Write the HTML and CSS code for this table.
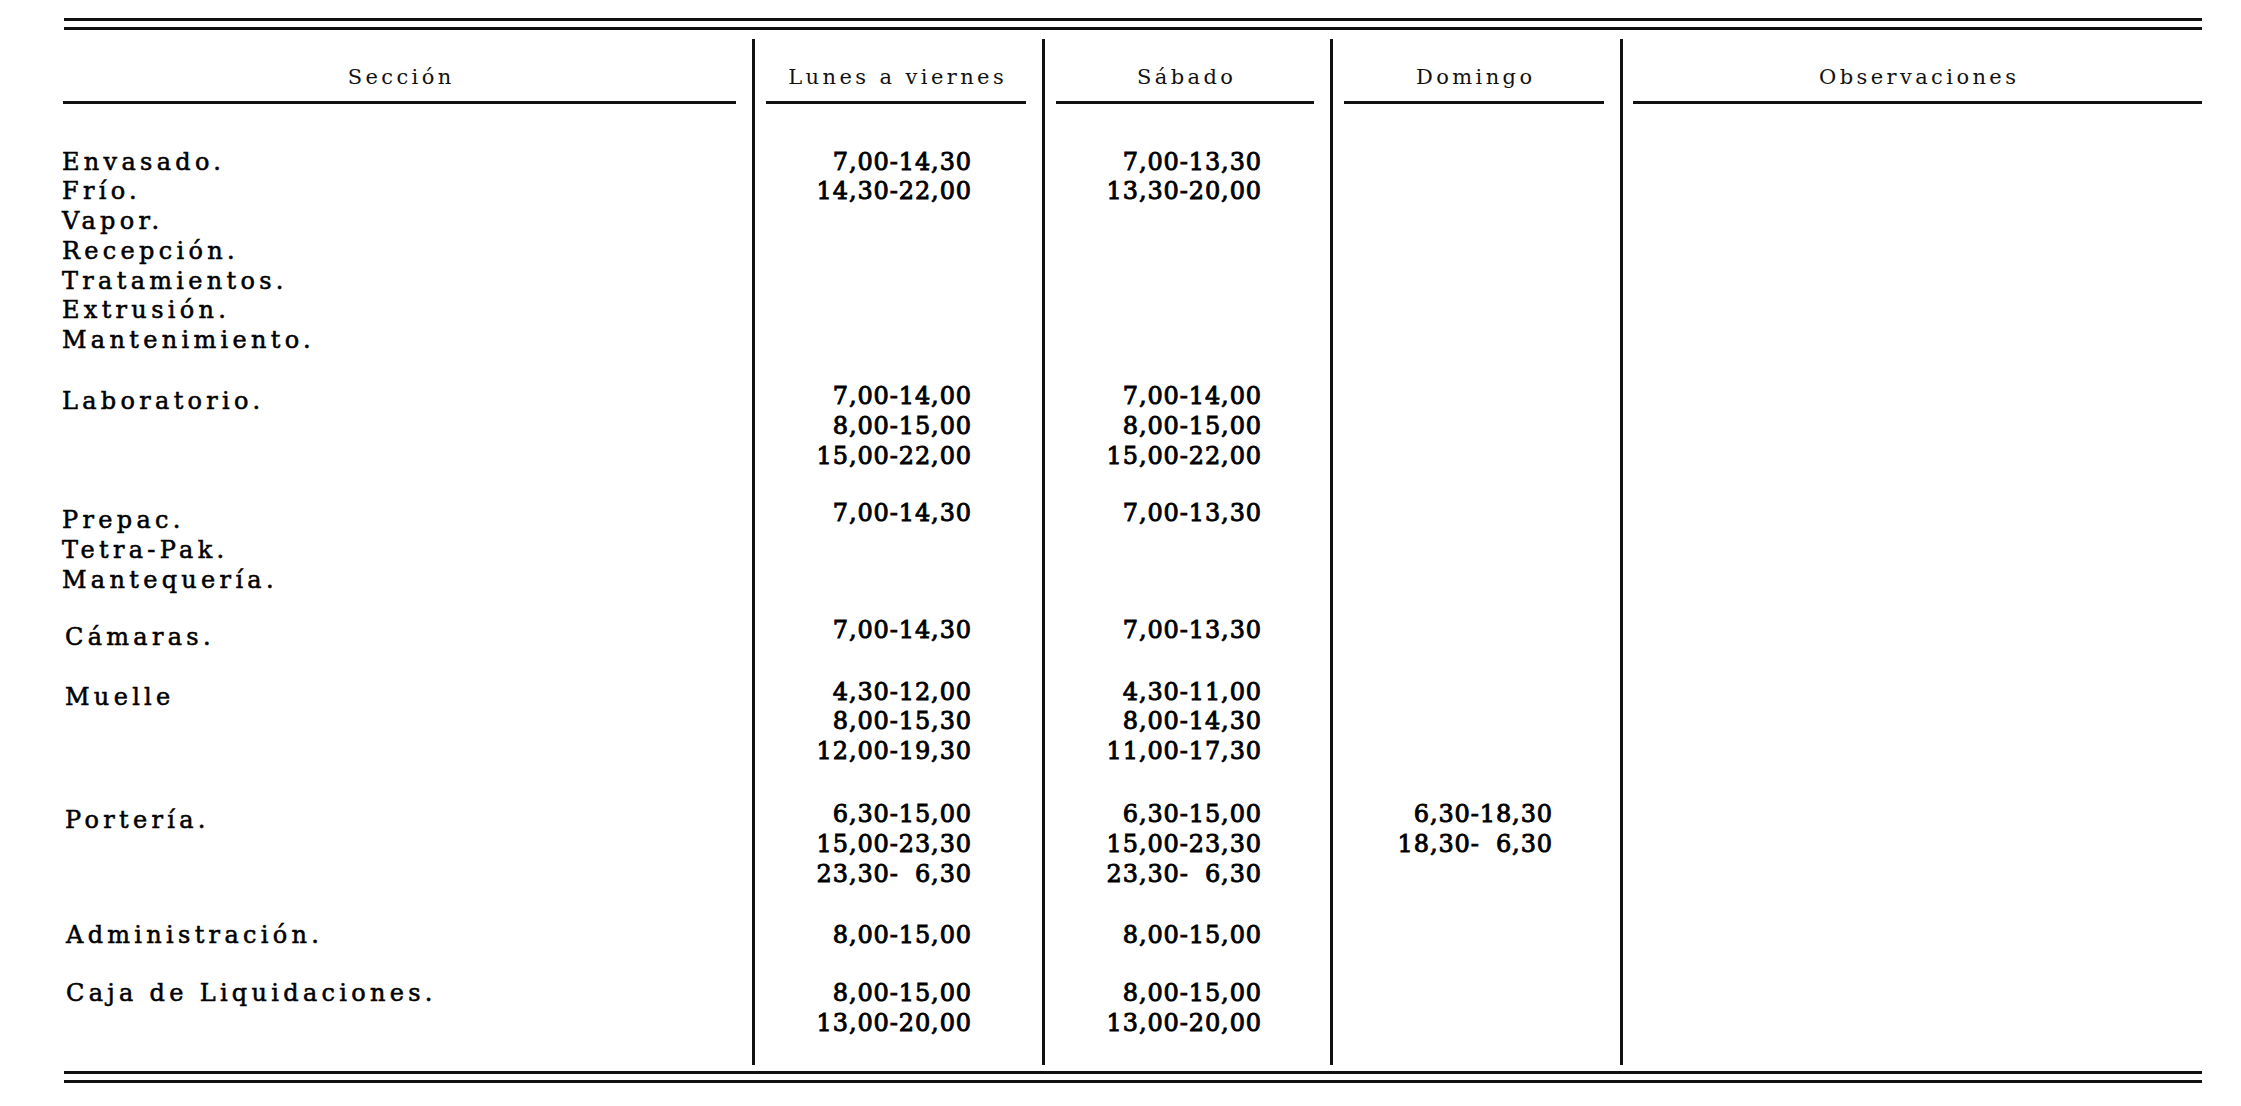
FILE: index.html
```html
<!DOCTYPE html>
<html lang="es">
<head>
<meta charset="utf-8">
<title>Horarios por sección</title>
<link rel="stylesheet" href="styles.css">
</head>
<body>
<div class="page">
  <div class="rule-double"></div>
  <div class="tbl">
    <div class="row head">
      <div class="cell h1"><div class="htext">Sección</div><div class="hline"></div></div>
      <div class="cell h2"><div class="htext">Lunes a viernes</div><div class="hline"></div></div>
      <div class="cell h3"><div class="htext">Sábado</div><div class="hline"></div></div>
      <div class="cell h4"><div class="htext">Domingo</div><div class="hline"></div></div>
      <div class="cell h5"><div class="htext">Observaciones</div><div class="hline"></div></div>
    </div>

    <div class="row g1">
      <div class="cell lab"><div>Envasado.</div><div>Frío.</div><div>Vapor.</div><div>Recepción.</div><div>Tratamientos.</div><div>Extrusión.</div><div>Mantenimiento.</div></div>
      <div class="cell tm c2"><div>7,00-14,30</div><div>14,30-22,00</div></div>
      <div class="cell tm c3"><div>7,00-13,30</div><div>13,30-20,00</div></div>
      <div class="cell tm c4"></div>
      <div class="cell obs"></div>
    </div>

    <div class="row g2">
      <div class="cell lab"><div>Laboratorio.</div></div>
      <div class="cell tm c2"><div>7,00-14,00</div><div>8,00-15,00</div><div>15,00-22,00</div></div>
      <div class="cell tm c3"><div>7,00-14,00</div><div>8,00-15,00</div><div>15,00-22,00</div></div>
      <div class="cell tm c4"></div>
      <div class="cell obs"></div>
    </div>

    <div class="row g3">
      <div class="cell lab"><div>Prepac.</div><div>Tetra-Pak.</div><div>Mantequería.</div></div>
      <div class="cell tm c2"><div>7,00-14,30</div></div>
      <div class="cell tm c3"><div>7,00-13,30</div></div>
      <div class="cell tm c4"></div>
      <div class="cell obs"></div>
    </div>

    <div class="row g4">
      <div class="cell lab"><div>Cámaras.</div></div>
      <div class="cell tm c2"><div>7,00-14,30</div></div>
      <div class="cell tm c3"><div>7,00-13,30</div></div>
      <div class="cell tm c4"></div>
      <div class="cell obs"></div>
    </div>

    <div class="row g5">
      <div class="cell lab"><div>Muelle</div></div>
      <div class="cell tm c2"><div>4,30-12,00</div><div>8,00-15,30</div><div>12,00-19,30</div></div>
      <div class="cell tm c3"><div>4,30-11,00</div><div>8,00-14,30</div><div>11,00-17,30</div></div>
      <div class="cell tm c4"></div>
      <div class="cell obs"></div>
    </div>

    <div class="row g6">
      <div class="cell lab"><div>Portería.</div></div>
      <div class="cell tm c2"><div>6,30-15,00</div><div>15,00-23,30</div><div>23,30-&#8199;6,30</div></div>
      <div class="cell tm c3"><div>6,30-15,00</div><div>15,00-23,30</div><div>23,30-&#8199;6,30</div></div>
      <div class="cell tm c4"><div>6,30-18,30</div><div>18,30-&#8199;6,30</div></div>
      <div class="cell obs"></div>
    </div>

    <div class="row g7">
      <div class="cell lab"><div>Administración.</div></div>
      <div class="cell tm c2"><div>8,00-15,00</div></div>
      <div class="cell tm c3"><div>8,00-15,00</div></div>
      <div class="cell tm c4"></div>
      <div class="cell obs"></div>
    </div>

    <div class="row g8">
      <div class="cell lab"><div>Caja de Liquidaciones.</div></div>
      <div class="cell tm c2"><div>8,00-15,00</div><div>13,00-20,00</div></div>
      <div class="cell tm c3"><div>8,00-15,00</div><div>13,00-20,00</div></div>
      <div class="cell tm c4"></div>
      <div class="cell obs"></div>
    </div>
  </div>
  <div class="rule-double bottom"></div>
</div>
</body>
</html>
```

FILE: styles.css
```css
* { box-sizing: border-box; }

html, body {
  margin: 0;
  padding: 0;
  background: #ffffff;
  color: #000000;
  font-family: "DejaVu Serif", "Liberation Serif", serif;
}

.page {
  width: 2241px;
  padding: 18px 0 0 62px;
}

.rule-double {
  margin-left: 2px;
  width: 2138px;
  height: 12px;
  border-top: 3px solid #111;
  border-bottom: 3px solid #111;
}

.rule-double.bottom {
  margin-top: 6px;
}

.tbl {
  margin-top: 9px;
  display: grid;
  grid-template-columns: 690px 290px 288px 290px 582px;
  width: 2140px;
}

.row { display: contents; }

.cell {
  font-size: 24px;
  line-height: 29.8px;
}

.row > .cell:not(:first-child) {
  border-left: 3px solid #111;
}

/* header */
.head > .cell {
  padding-top: 22.5px;
  font-size: 21px;
  line-height: 30px;
  text-align: center;
  color: #111;
}

.htext {
  letter-spacing: 3.4px;
  padding-left: 3.4px;
}

.hline {
  margin-top: 9.5px;
  height: 3px;
  background: #111;
}

.h1 { padding-left: 1px; padding-right: 16px; }
.h2, .h3, .h4 { padding-left: 11px; padding-right: 16px; }
.h5 { padding-left: 10px; padding-right: 0; }

/* body cells */
.lab {
  letter-spacing: 4.3px;
  -webkit-text-stroke: 0.55px #000;
  white-space: nowrap;
}

.tm {
  text-align: right;
  letter-spacing: 0.9px;
  -webkit-text-stroke: 0.9px #000;
  white-space: nowrap;
}

.c2 { padding-right: 70px; }
.c3 { padding-right: 68px; }
.c4 { padding-right: 67px; }

/* vertical placement of each group */
.g1 > .cell { padding-top: 43.5px; }

.g2 > .cell { padding-top: 26.1px; }
.g2 > .lab { padding-top: 31.1px; }

.g3 > .cell { padding-top: 27.4px; }
.g3 > .lab { padding-top: 34.6px; }

.g4 > .cell { padding-top: 20.6px; }
.g4 > .lab { padding-top: 27.6px; padding-left: 3px; }

.g5 > .cell { padding-top: 24.6px; }
.g5 > .lab { padding-top: 30.2px; padding-left: 3px; }

.g6 > .cell { padding-top: 33.5px; }
.g6 > .lab { padding-top: 39.2px; padding-left: 3px; }

.g7 > .cell { padding-top: 30.7px; }
.g7 > .lab { padding-left: 4px; }

.g8 > .cell { padding-top: 28.8px; padding-bottom: 26.2px; }
.g8 > .lab { padding-left: 4px; }
```
